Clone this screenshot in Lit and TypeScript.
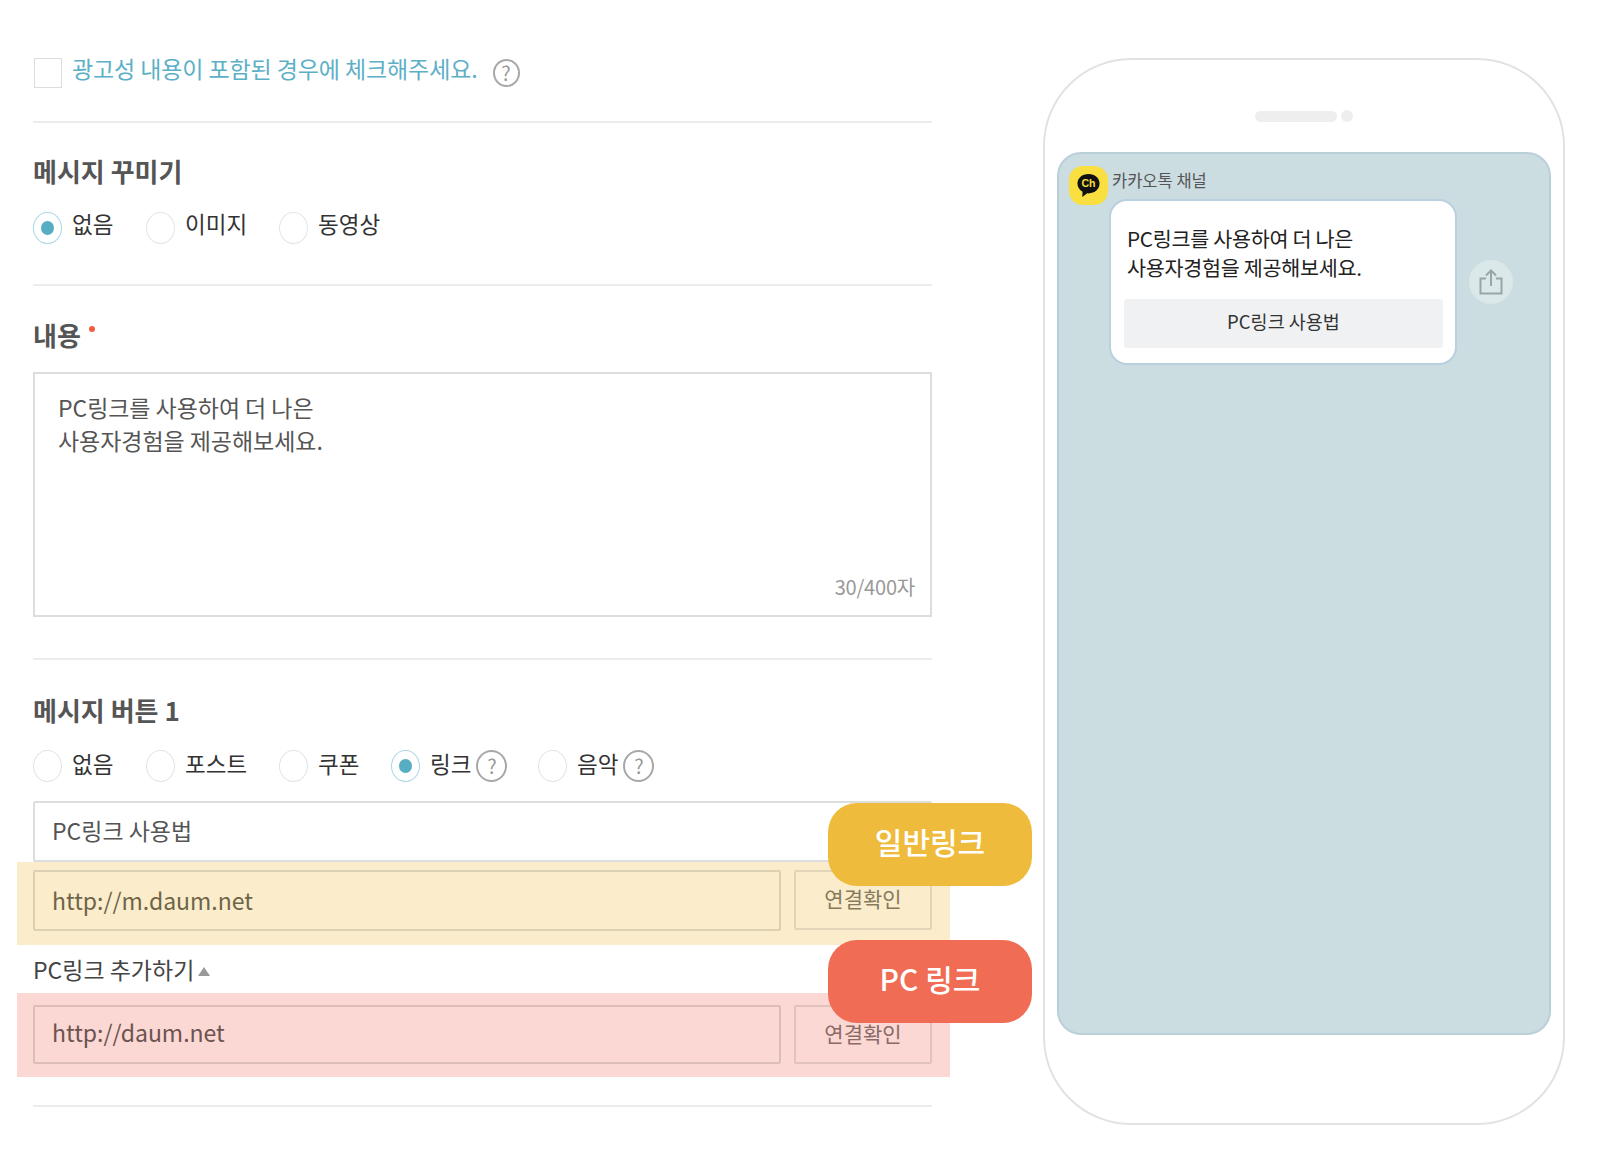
import { LitElement, html, css } from "lit";
import { customElement } from "lit/decorators.js";

@customElement("app-root")
export class AppRoot extends LitElement {
  static styles = css`
    :host {
      display: block;
      width: 1600px;
      height: 1157px;
      background: #fff;
      font-family: "Noto Sans CJK KR", "Noto Sans", sans-serif;
      color: #333;
      overflow: hidden;
    }
    .page { position: relative; display: flex; align-items: flex-start; padding: 58px 0 0 33px; height: 1157px; box-sizing: border-box; }
    .form { width: 899px; flex: none; }
    .divider { height: 2px; background: #ececec; }
    .check-row { display: flex; align-items: center; height: 30px; }
    .checkbox { width: 28.5px; height: 30px; margin-left: 0.5px; box-sizing: border-box; border: 1.5px solid #ddd; flex: none; }
    .notice { margin-left: 10px; font-size: 23px; line-height: 30px; color: #5cb0c6; position: relative; top: -5px; letter-spacing: -0.1px; }
    .help { display: inline-flex; align-items: center; justify-content: center; width: 27px; height: 28px; box-sizing: border-box; border: 2px solid #a8a8a8; border-radius: 50%; color: #999; font-size: 20px; line-height: 1; flex: none; }
    .check-row .help { margin-left: 15px; }
    h2 { margin: 0; font-size: 26px; line-height: 34px; font-weight: 700; color: #555; }
    .req { display: inline-block; width: 6px; height: 6px; border-radius: 50%; background: #f25c3f; margin-left: 8px; vertical-align: 14px; }
    .radios { display: flex; height: 32px; align-items: center; }
    .radio { width: 28.5px; height: 32px; box-sizing: border-box; border: 1.5px solid #e4e4e4; border-radius: 50%; flex: none; display: flex; align-items: center; justify-content: center; }
    .radio.on { border-color: #aad8e4; }
    .radio.on::after { content: ""; width: 13px; height: 14px; border-radius: 50%; background: #57adc2; }
    .option { display: flex; align-items: center; }
    .option span.label { margin-left: 10.5px; font-size: 22.5px; line-height: 30px; color: #333; position: relative; }
    .r1 .label { top: -5px; }
    .r2 .label { top: -3px; }
    .option .help { margin-left: 5px; width: 31px; height: 32px; }
    .textarea { position: relative; height: 245px; box-sizing: border-box; border: 2px solid #ddd; padding: 17px 23px; font-size: 23px; line-height: 33px; color: #555; letter-spacing: -0.05px; }
    .count { position: absolute; right: 15px; bottom: 14px; font-size: 20px; line-height: 28px; color: #999; letter-spacing: -0.2px; }
    .input { display: flex; align-items: center; box-sizing: border-box; border: 2px solid #ddd; border-radius: 2px; padding-left: 17px; padding-bottom: 4px; font-size: 23px; color: #555; background: #fff; }
    .band { margin: 0 -18px 0 -16px; padding: 0 18px 0 16px; display: flex; align-items: flex-start; }
    .band.yellow { background: #fbedcc; height: 83px; padding-top: 8px; box-sizing: border-box; }
    .band.red { background: #fbd8d4; height: 84px; padding-top: 12px; box-sizing: border-box; }
    .band .input { width: 748px; background: transparent; color: inherit; border-color: rgba(0,0,0,.12); }
    .band.yellow .input { height: 61px; color: #6e6448; padding-bottom: 1px; }
    .band.red .input { height: 59px; color: #6b5350; padding-bottom: 5px; }
    .check-btn { margin-left: 13px; width: 138px; box-sizing: border-box; border: 2px solid rgba(0,0,0,.1); border-radius: 2px; display: flex; align-items: center; justify-content: center; font-size: 21px; }
    .band.yellow .check-btn { height: 60px; color: #857a5c; padding-bottom: 5px; }
    .band.red .check-btn { height: 59px; color: #8a6a67; padding-bottom: 4px; }
    .pc-row { height: 48px; display: flex; align-items: center; font-size: 23px; color: #444; padding-bottom: 1px; box-sizing: border-box; }
    .tri { margin-left: 4px; width: 0; height: 0; border-left: 6px solid transparent; border-right: 6px solid transparent; border-bottom: 9px solid #999; position: relative; top: 3px; }
    .badge { position: absolute; left: 828px; width: 204px; height: 83px; border-radius: 29px; color: #fff; font-size: 30px; font-weight: 500; display: flex; align-items: center; justify-content: center; padding-bottom: 7px; box-sizing: border-box; }
    .badge.gold { top: 803px; background: #efbb3c; }
    .badge.coral { top: 940px; background: #f06c55; }

    .phone { margin-left: 111px; width: 522px; height: 1067px; flex: none; box-sizing: border-box; border: 2px solid #e2e2e2; border-radius: 88px; padding: 0 12px; }
    .speaker { display: flex; justify-content: center; align-items: center; gap: 4px; height: 12px; margin: 50px 0 30px; }
    .speaker i { display: block; width: 82px; height: 11px; border-radius: 6px; background: #eee; }
    .speaker b { display: block; width: 12px; height: 12px; border-radius: 50%; background: #eee; }
    .screen { height: 883px; box-sizing: border-box; background: #cbdde1; border: 2px solid #b9d0d9; border-radius: 24px; padding: 12px 10px; }
    .chat { display: flex; align-items: flex-start; }
    .avatar { width: 39px; height: 39px; border-radius: 14px; background: #f9df3f; display: flex; align-items: center; justify-content: center; flex: none; }
    .chat-main { margin-left: 4px; }
    .name { font-size: 16.5px; line-height: 24px; color: #555; height: 33px; padding-top: 2px; box-sizing: border-box; }
    .msg-row { display: flex; align-items: center; margin-left: -3px; }
    .bubble { width: 348px; height: 166px; box-sizing: border-box; background: #fff; border: 2px solid #b9d0e0; border-radius: 18px; padding: 23px 12px 0 13px; flex: none; }
    .bubble p { margin: 0 0 0 3px; font-size: 20.7px; line-height: 28.5px; color: #222; letter-spacing: -0.3px; }
    .bubble .btn { margin-top: 18px; height: 49px; background: #f0f1f3; border-radius: 3px; display: flex; align-items: center; justify-content: center; font-size: 18.5px; color: #333; padding-bottom: 5px; box-sizing: border-box; }
    .share { margin-left: 12px; width: 44px; height: 44px; border-radius: 50%; background: #dbe8ea; display: flex; align-items: center; justify-content: center; flex: none; }
    .sec1 { margin-top: 33px; }
    .h1 { margin-top: 31px; }
    .r1 { margin-top: 24px; }
    .d2 { margin-top: 40px; }
    .h2 { margin-top: 32px; }
    .ta { margin-top: 20px; }
    .d3 { margin-top: 41px; }
    .h3 { margin-top: 33px; }
    .r2 { margin-top: 23px; }
    .i1 { margin-top: 19px; height: 61px; }
    .d4 { margin-top: 28px; }
  `;

  private option(label: string, on: boolean, width: number, help = false) {
    return html`<div class="option" style="width:${width}px">
      <div class="radio ${on ? "on" : ""}"></div>
      <span class="label">${label}</span>
      ${help ? html`<span class="help">?</span>` : null}
    </div>`;
  }

  render() {
    return html`
      <div class="page">
        <div class="form">
          <div class="check-row">
            <div class="checkbox"></div>
            <span class="notice">광고성 내용이 포함된 경우에 체크해주세요.</span>
            <span class="help">?</span>
          </div>
          <div class="divider sec1"></div>
          <h2 class="h1">메시지 꾸미기</h2>
          <div class="radios r1">
            ${this.option("없음", true, 113)}
            ${this.option("이미지", false, 133)}
            ${this.option("동영상", false, 120)}
          </div>
          <div class="divider d2"></div>
          <h2 class="h2">내용<span class="req"></span></h2>
          <div class="textarea ta">PC링크를 사용하여 더 나은<br />사용자경험을 제공해보세요.<span class="count">30/400자</span></div>
          <div class="divider d3"></div>
          <h2 class="h3">메시지 버튼 1</h2>
          <div class="radios r2">
            ${this.option("없음", false, 113)}
            ${this.option("포스트", false, 133)}
            ${this.option("쿠폰", false, 112)}
            ${this.option("링크", true, 147, true)}
            ${this.option("음악", false, 120, true)}
          </div>
          <div class="input i1">PC링크 사용법</div>
          <div class="band yellow">
            <div class="input">http://m.daum.net</div>
            <div class="check-btn">연결확인</div>
          </div>
          <div class="pc-row">PC링크 추가하기<span class="tri"></span></div>
          <div class="band red">
            <div class="input">http://daum.net</div>
            <div class="check-btn">연결확인</div>
          </div>
          <div class="divider d4"></div>
        </div>

        <div class="phone">
          <div class="speaker"><i></i><b></b></div>
          <div class="screen">
            <div class="chat">
              <div class="avatar">
                <svg width="25" height="27" viewBox="0 0 26 28">
                  <path d="M13 2C6.4 2 1.5 6.3 1.5 12c0 3.7 2.1 6.8 5.3 8.6L6.5 26l5.2-3.9c.4 0 .9.1 1.3.1 6.6 0 11.5-4.4 11.5-10.2S19.6 2 13 2z" fill="#111" />
                  <text x="13" y="16" text-anchor="middle" font-size="11" font-weight="700" fill="#f9df3f" font-family="Liberation Sans, sans-serif">Ch</text>
                </svg>
              </div>
              <div class="chat-main">
                <div class="name">카카오톡 채널</div>
                <div class="msg-row">
                  <div class="bubble">
                    <p>PC링크를 사용하여 더 나은<br />사용자경험을 제공해보세요.</p>
                    <div class="btn">PC링크 사용법</div>
                  </div>
                  <div class="share">
                    <svg width="26" height="28" viewBox="0 0 26 28" fill="none" stroke="#9aa5a8" stroke-width="2">
                      <path d="M13 18V2.5M8 7.5l5-5 5 5" />
                      <path d="M8 10.5H2.5v15h21v-15H18" />
                    </svg>
                  </div>
                </div>
              </div>
            </div>
          </div>
        </div>

        <div class="badge gold">일반링크</div>
        <div class="badge coral">PC 링크</div>
      </div>
    `;
  }
}
